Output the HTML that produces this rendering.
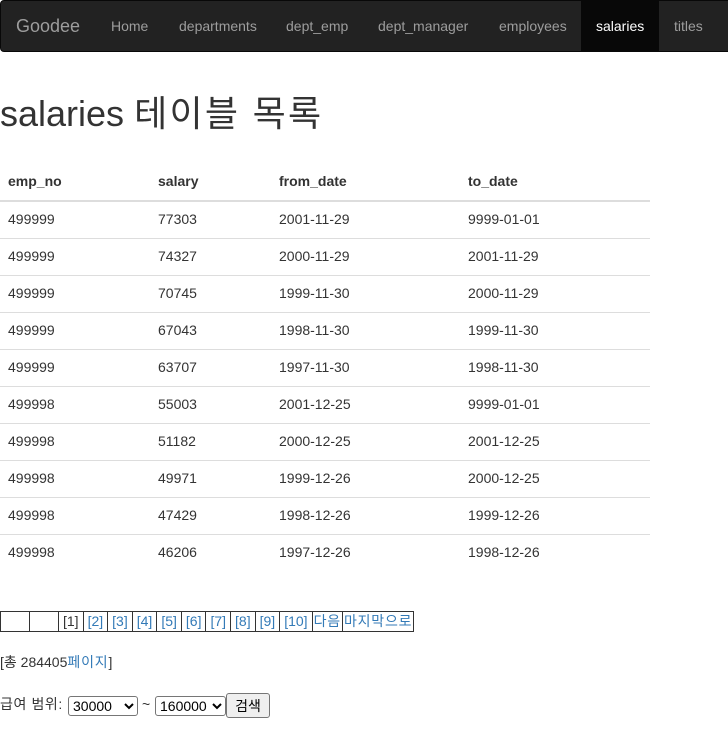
<!DOCTYPE html>
<html><head><meta charset="utf-8"><style>
body{margin:0;font-family:"Liberation Sans","Noto Sans CJK KR",sans-serif;font-size:14px;color:#333;background:#fff;line-height:1.42857}
.nav{position:absolute;left:0;top:0;width:740px;height:50px;background:#222;border:1px solid #080808;border-radius:4px}
.nav span{position:absolute;top:0;line-height:50px;color:#9d9d9d;font-size:14px}
.nav .brand{font-size:18px;left:15px}
.nav .act{background:#080808;color:#fff;padding:0 15px;left:580px}
h1{position:absolute;left:0;top:94px;margin:0;font-size:36px;font-weight:normal;line-height:1.1}
h1 .k{letter-spacing:2.3px}
table.d{position:absolute;left:0;top:163px;width:650px;border-collapse:collapse}
table.d th,table.d td{text-align:left;padding:0 8px;height:36px;border-top:1px solid #ddd}
table.d th{border-top:none;border-bottom:2px solid #ddd;height:37px;font-weight:bold}
table.p{position:absolute;left:0;top:611px;border-collapse:collapse}
table.p td{border:1px solid #333;height:19px;padding:0 4px;line-height:19px;font-size:14px}
table.p td.k{padding:0 1px;letter-spacing:0.8px}
a{color:#337ab7;text-decoration:none}
.t{position:absolute;left:0;top:653px}
.s{position:absolute;top:695px}
select{font-family:inherit;font-size:14px;height:20px;border:1px solid #767676;border-radius:3px;background:#fff;padding:0}
button{font-family:inherit;font-size:14px;height:25px;width:44px;border:1px solid #767676;border-radius:3px;background:#efefef;padding:0}
</style></head><body>
<div class="nav"><span class="brand">Goodee</span><span style="left:110px">Home</span><span style="left:178px">departments</span><span style="left:285px">dept_emp</span><span style="left:377px">dept_manager</span><span style="left:498px">employees</span><span class="act">salaries</span><span style="left:673px">titles</span></div>
<h1>salaries <span class="k">테이블 목록</span></h1>
<table class="d">
<tr><th style="width:134px">emp_no</th><th style="width:105px">salary</th><th style="width:173px">from_date</th><th>to_date</th></tr>
<tr><td>499999</td><td>77303</td><td>2001-11-29</td><td>9999-01-01</td></tr>
<tr><td>499999</td><td>74327</td><td>2000-11-29</td><td>2001-11-29</td></tr>
<tr><td>499999</td><td>70745</td><td>1999-11-30</td><td>2000-11-29</td></tr>
<tr><td>499999</td><td>67043</td><td>1998-11-30</td><td>1999-11-30</td></tr>
<tr><td>499999</td><td>63707</td><td>1997-11-30</td><td>1998-11-30</td></tr>
<tr><td>499998</td><td>55003</td><td>2001-12-25</td><td>9999-01-01</td></tr>
<tr><td>499998</td><td>51182</td><td>2000-12-25</td><td>2001-12-25</td></tr>
<tr><td>499998</td><td>49971</td><td>1999-12-26</td><td>2000-12-25</td></tr>
<tr><td>499998</td><td>47429</td><td>1998-12-26</td><td>1999-12-26</td></tr>
<tr><td>499998</td><td>46206</td><td>1997-12-26</td><td>1998-12-26</td></tr>
</table>
<table class="p"><tr><td style="width:20px"></td><td style="width:20px"></td><td>[1]</td><td><a>[2]</a></td><td><a>[3]</a></td><td><a>[4]</a></td><td><a>[5]</a></td><td><a>[6]</a></td><td><a>[7]</a></td><td><a>[8]</a></td><td><a>[9]</a></td><td><a>[10]</a></td><td class="k"><a>다음</a></td><td class="k"><a>마지막으로</a></td></tr></table>
<div class="t">[총 284405<a style="letter-spacing:0.8px">페이지</a>]</div>
<div class="s" style="left:0;letter-spacing:0.6px">급여 범위:</div>
<div class="s" style="left:68px;top:696px"><select style="width:70px"><option>30000</option></select></div>
<div class="s" style="left:142px">~</div>
<div class="s" style="left:155px;top:696px"><select style="width:71px"><option>160000</option></select></div>
<div class="s" style="left:226px;top:693px"><button>검색</button></div>
</body></html>
